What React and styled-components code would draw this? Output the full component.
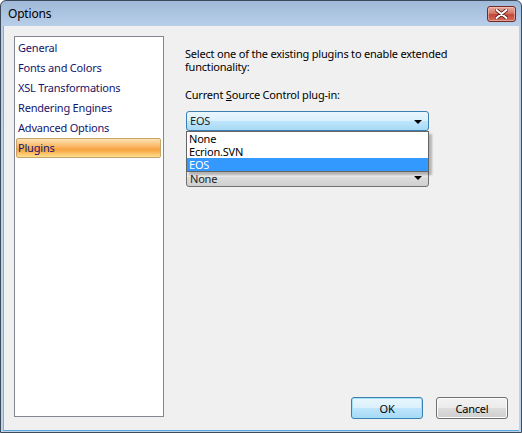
import React, { useState } from 'react';
import styled, { createGlobalStyle } from 'styled-components';

const GlobalStyle = createGlobalStyle`
  html, body {
    margin: 0;
    padding: 0;
    background: #ffffff;
  }
  body {
    font-family: "Noto Sans", "Open Sans", sans-serif;
    font-size: 11px;
    letter-spacing: -0.2px;
  }
`;

const Window = styled.div`
  width: 522px;
  height: 433px;
  box-sizing: border-box;
  display: flex;
  flex-direction: column;
  background: linear-gradient(#9fb9d8 0px, #b9d0ea 26px, #bcd3ec 100%);
  border: 1px solid #3d4a5a;
  border-radius: 6px 6px 0 0;
  overflow: hidden;
`;

const TitleBar = styled.div`
  height: 25px;
  display: flex;
  align-items: center;
  justify-content: space-between;
  padding: 0 5px 0 7px;
  color: #000;
  font-size: 12px;
`;

const CloseButton = styled.div`
  width: 29px;
  height: 16px;
  box-sizing: border-box;
  margin-top: 1px;
  border: 1px solid #6e2a24;
  border-radius: 3px;
  background: linear-gradient(#e8aa9f 0%, #d47766 45%, #c4453a 55%, #d2705f 100%);
  box-shadow: inset 0 0 0 1px rgba(255, 210, 200, 0.5);
  display: flex;
  align-items: center;
  justify-content: center;
`;

const Client = styled.div`
  flex: 1;
  display: flex;
  margin: 0 2px 1px 2px;
  padding: 10px 11px 13px 10px;
  background: #f0f0f0;
  border-left: 1px solid #7fb1dd;
  border-bottom: 1px solid #5aa5dc;
`;

const Sidebar = styled.div`
  width: 150px;
  box-sizing: border-box;
  border: 1px solid #828790;
  background: #fff;
  padding: 1px 2px 1px 1px;
  display: flex;
  flex-direction: column;
`;

const NavItem = styled.div`
  height: 20px;
  box-sizing: border-box;
  padding: 0 1px;
  line-height: 18px;
  color: #15156b;
  border: 1px solid ${(p) => (p.$active ? '#c9a46a' : 'transparent')};
  border-radius: 2px;
  background: ${(p) =>
    p.$active
      ? 'linear-gradient(#fde3b4 0%, #fbb868 40%, #f9a33e 60%, #fde08e 100%)'
      : 'transparent'};
`;

const RightColumn = styled.div`
  flex: 1;
  display: flex;
  flex-direction: column;
`;

const Content = styled.div`
  padding: 11px 0 0 21px;
  display: flex;
  flex-direction: column;
  width: 243px;
`;

const Paragraph = styled.div`
  line-height: 13px;
  color: #000;
  width: 290px;
  margin-bottom: ${(p) => p.$gap || 0}px;
`;

const Underlined = styled.span`
  text-decoration: underline;
`;

const ComboWrap = styled.div`
  position: relative;
  margin-top: ${(p) => p.$top || 0}px;
  width: 243px;
  margin-left: 1px;
`;

const Combo = styled.div`
  height: 20px;
  box-sizing: border-box;
  display: flex;
  align-items: center;
  justify-content: space-between;
  padding: 0 6px 0 3px;
  border-radius: 3px;
  color: #1e1e1e;
  border: 1px solid ${(p) => (p.$hot ? '#3c7fb1' : '#707070')};
  background: ${(p) =>
    p.$hot
      ? 'linear-gradient(#eaf6fd 0%, #d9f0fc 50%, #bee6fd 50%, #a7d9f5 100%)'
      : 'linear-gradient(#f2f2f2 0%, #ebebeb 50%, #dddddd 50%, #cfcfcf 100%)'};
`;

const ComboText = styled.span`
  line-height: 12px;
  margin-top: ${(p) => p.$shift || 0}px;
`;

const Arrow = styled.span`
  width: 0;
  height: 0;
  border-left: 4px solid transparent;
  border-right: 4px solid transparent;
  border-top: 4px solid #000;
  margin-top: 1px;
`;

const DropList = styled.div`
  position: absolute;
  top: 20px;
  left: 0;
  width: 243px;
  box-sizing: border-box;
  background: #fff;
  border: 1px solid #646464;
  box-shadow: 3px 3px 2px rgba(0, 0, 0, 0.25);
  z-index: 2;
`;

const DropItem = styled.div`
  height: 13px;
  line-height: 13px;
  padding: 1px 2px 0;
  box-sizing: border-box;
  color: ${(p) => (p.$selected ? '#fff' : '#000')};
  background: ${(p) => (p.$selected ? '#3399ff' : 'transparent')};
`;

const DropLabel = styled.span`
  display: block;
  line-height: 12px;
`;

const Footer = styled.div`
  margin-top: auto;
  margin-bottom: -2px;
  display: flex;
  justify-content: flex-end;
  gap: 13px;
`;

const Button = styled.button`
  width: 72px;
  height: 22px;
  box-sizing: border-box;
  padding: 0;
  font-family: inherit;
  font-size: 11px;
  letter-spacing: -0.2px;
  color: #000;
  border-radius: 3px;
  border: 1px solid ${(p) => (p.$primary ? '#3c7fb1' : '#707070')};
  background: ${(p) =>
    p.$primary
      ? 'linear-gradient(#eaf6fd 0%, #d9f0fc 50%, #bee6fd 50%, #a7d9f5 100%)'
      : 'linear-gradient(#f2f2f2 0%, #ebebeb 50%, #dddddd 50%, #cfcfcf 100%)'};
  box-shadow: inset 0 0 0 1px ${(p) => (p.$primary ? '#9ee1f8' : '#fcfcfc')};
`;

const navItems = [
  'General',
  'Fonts and Colors',
  'XSL Transformations',
  'Rendering Engines',
  'Advanced Options',
  'Plugins',
];

const plugins = ['None', 'Ecrion.SVN', 'EOS'];

const App = () => {
  const [active, setActive] = useState('Plugins');
  const [plugin, setPlugin] = useState('EOS');

  return (
    <>
      <GlobalStyle />
      <Window>
        <TitleBar>
          <span>Options</span>
          <CloseButton>
            <svg width="13" height="10" viewBox="0 0 13 10">
              <path
                d="M1.5 1 L11.5 9 M11.5 1 L1.5 9"
                stroke="#5a1d18"
                strokeWidth="3.6"
                strokeLinecap="round"
              />
              <path
                d="M1.5 1 L11.5 9 M11.5 1 L1.5 9"
                stroke="#ffffff"
                strokeWidth="2"
                strokeLinecap="round"
              />
            </svg>
          </CloseButton>
        </TitleBar>
        <Client>
          <Sidebar>
            {navItems.map((item) => (
              <NavItem
                key={item}
                $active={item === active}
                onClick={() => setActive(item)}
              >
                {item}
              </NavItem>
            ))}
          </Sidebar>
          <RightColumn>
            <Content>
              <Paragraph $gap={15}>
                Select one of the existing plugins to enable extended
                <br />
                functionality:
              </Paragraph>
              <Paragraph $gap={10}>
                Current <Underlined>S</Underlined>ource Control plug-in:
              </Paragraph>
              <ComboWrap>
                <Combo $hot>
                  <ComboText>{plugin}</ComboText>
                  <Arrow />
                </Combo>
                <DropList>
                  {plugins.map((p) => (
                    <DropItem
                      key={p}
                      $selected={p === plugin}
                      onClick={() => setPlugin(p)}
                    >
                      <DropLabel>{p}</DropLabel>
                    </DropItem>
                  ))}
                </DropList>
              </ComboWrap>
              <ComboWrap $top={36}>
                <Combo>
                  <ComboText $shift={3}>None</ComboText>
                  <Arrow />
                </Combo>
              </ComboWrap>
            </Content>
            <Footer>
              <Button $primary>OK</Button>
              <Button>Cancel</Button>
            </Footer>
          </RightColumn>
        </Client>
      </Window>
    </>
  );
};

export default App;
